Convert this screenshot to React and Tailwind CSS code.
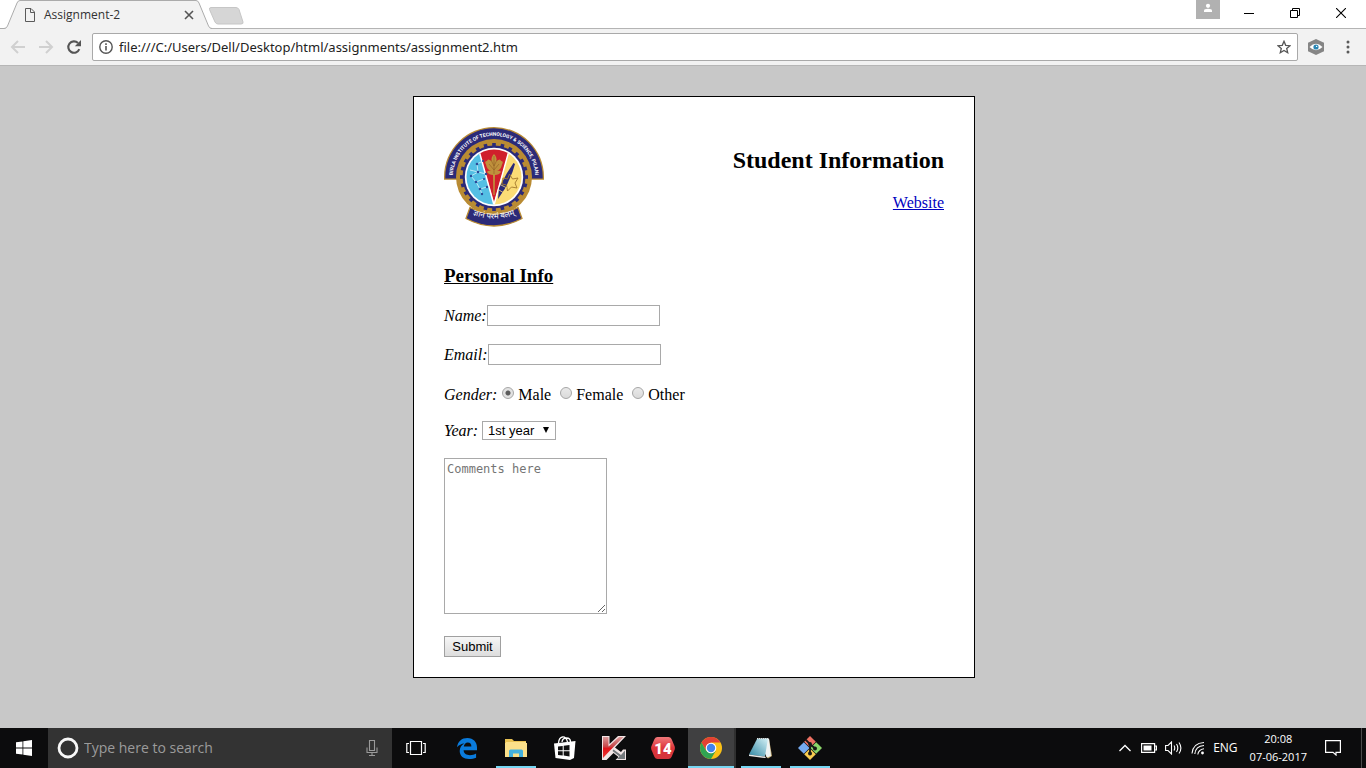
import React from 'react';

const teeth = Array.from({ length: 24 }, (_, i) => i * 15);

function CollegeLogo() {
  return (
    <svg viewBox="0 0 100 100" className="size-[100px] shrink-0" role="img" aria-label="College emblem">
      <defs>
        <clipPath id="disc"><circle cx="50" cy="50" r="27.5" /></clipPath>
        <path id="topArc" d="M8.800 53V50A41.200 41.200 0 0 1 91.200 50V53" />
        <path id="ribbonArc" d="M20 83.500Q50 100 80 83.500" />
      </defs>
      <path d="M0 52.800V50A50 50 0 0 1 100 50V52.800H86V50H14V52.800Z" fill="#b98b33" />
      <path d="M1.300 51.500V50A48.700 48.700 0 0 1 98.700 50V51.500H86V50H14V51.500Z" fill="#2b2a78" />
      <path d="M26 80.500Q50 93 74 80.500L78 91.500Q50 106.500 22 91.500Z" fill="#2b2a78" stroke="#b98b33" strokeWidth="1.3" />
      <circle cx="50" cy="50" r="38" fill="#b98b33" />
      <circle cx="50" cy="50" r="31.5" fill="#2b2a78" />
      {teeth.map((angle) => (
        <rect key={angle} x="48.2" y="16" width="3.6" height="4" fill="#2b2a78" transform={`rotate(${angle} 50 50)`} />
      ))}
      <circle cx="50" cy="50" r="29.2" fill="#fff" />
      <g clipPath="url(#disc)">
        <path d="M20 20h15L50 78H20Z" fill="#54bfe4" />
        <path d="M80 20H65L50 78h30Z" fill="#fbdc76" />
        <path d="M34 20h32L50 76Z" fill="#d01f2c" />
        <path d="M34 20 50 78 66 20" fill="none" stroke="#fff" strokeWidth="1.5" />
        <path d="m33 37 6-3m-6 3 1 8 8 2m-8-2-7 4m0 0 5 6 8-3m-8 3 4 7 7-2m-7 2 2 5M26 43l8 2" fill="none" stroke="#d8f2fa" strokeWidth=".8" />
        <g fill="#2b4a98">
          <circle cx="33" cy="37" r="1.3" /><circle cx="39" cy="34" r="1.1" /><circle cx="34" cy="45" r="1.3" />
          <circle cx="42" cy="47" r="1.2" /><circle cx="27" cy="49" r="1.2" /><circle cx="32" cy="55" r="1.3" />
          <circle cx="40" cy="52" r="1.1" /><circle cx="36" cy="62" r="1.3" /><circle cx="43" cy="60" r="1.2" />
          <circle cx="38" cy="67" r="1.2" />
        </g>
        <path d="M50 27q3 3 2.500 7 4-3 4.500 0 3 0 1 3.500-1 5-5 6.500 3-1 4 1-2 3-6 3l-.400 20h-1.200L49 48q-4 0-6-3 1-2 4-1-4-1.500-5-6.500-2-3.500 1-3.500.5-3 4.500 0-.5-4 2.500-7Z" fill="#c0913c" />
        <path d="M50 29v18m-3-14 3 6 3-6m-8 4 5 6 5-6" fill="none" stroke="#8f5f22" strokeWidth=".6" />
        <path d="m69.500 36 1.500 1-2.500 8-6.500 15-8 12 1-11 8-15Z" fill="#2b2a78" />
        <path d="m59 51 4.500 1 2-5 3 5 5.500-1-3 5 2 5-5.500-1-4 4-1-6-4.500-1Z" fill="none" stroke="#a3782c" strokeWidth=".9" />
        <path d="m57 58 6 3m-8 2 5 3" stroke="#fbdc76" strokeWidth=".8" />
      </g>
      <text fill="#fff" fontFamily="'Liberation Sans Narrow', Roboto, sans-serif" fontWeight="700" fontSize="5" textAnchor="middle">
        <textPath href="#topArc" startOffset="50%">BIRLA INSTITUTE OF TECHNOLOGY &amp; SCIENCE, PILANI</textPath>
      </text>
      <text fill="#fff" fontFamily="'Noto Sans Devanagari', 'Noto Sans', sans-serif" fontSize="8" textAnchor="middle">
        <textPath href="#ribbonArc" startOffset="50%">ज्ञानं परमं बलम्</textPath>
      </text>
    </svg>
  );
}

function BrowserChrome() {
  return (
    <header className="font-['Open_Sans',sans-serif]">
      <div className="flex h-[29px] items-start border-b border-[#b4b4b4] bg-white">
        <div className="relative h-[29px] w-[212px] shrink-0">
          <svg viewBox="0 0 212 29" className="absolute inset-0 h-[29px] w-[212px]" aria-hidden="true">
            <path d="M0 29 5 28.500Q7 28 8 26L17 3Q18 .5 20 .5H196Q198 .5 199 3L208 26Q209 28 212 29Z" fill="#f2f2f2" />
            <path d="M0 28.500H4Q6.500 28.500 7.500 26L17 3Q18 .5 20 .5H196Q198 .5 199 3L208.500 26Q209.500 28.500 212 28.500" fill="none" stroke="#ababab" />
          </svg>
          <div className="relative flex h-[30px] items-center pl-6 pr-[15px]">
            <svg viewBox="0 0 12 14" className="h-[14px] w-3" fill="none" stroke="#5a5a5a" aria-hidden="true">
              <path d="M1.500.5H7l3.500 3.500v9.500h-9ZM6.500.5v4h4" />
            </svg>
            <span className="ml-2 grow text-[12px] leading-4 text-[#333]">Assignment-2</span>
            <button aria-label="Close tab" className="grid size-4 place-items-center">
              <svg viewBox="0 0 10 10" className="size-[10px]" stroke="#555" strokeWidth="1.600" aria-hidden="true"><path d="m1 1 8 8M9 1 1 9" /></svg>
            </button>
          </div>
        </div>
        <button aria-label="New tab" className="mt-[7px] -ml-1">
          <svg viewBox="0 0 36 18" className="h-[18px] w-9" aria-hidden="true">
            <path d="M3 .5h25q2 0 3 2l4 12.500q.5 2-2 2H10q-2 0-3-2L1.500 2.500Q1 .5 3 .5Z" fill="#d6d6d6" stroke="#c6c6c6" />
          </svg>
        </button>
        <div className="ml-auto flex">
          <button aria-label="Profile" className="flex h-[19px] w-6 justify-center bg-[#b1b1b1] pt-[3px]">
            <svg viewBox="0 0 10 10" className="size-[10px]" fill="#fff" aria-hidden="true"><circle cx="5" cy="2.800" r="2.100" /><path d="M1 9V7.500Q1 5.800 5 5.800T9 7.500V9Z" /></svg>
          </button>
          <button aria-label="Minimize" className="ml-[6px] grid h-[26px] w-[46px] place-items-center">
            <svg viewBox="0 0 10 10" className="size-[10px]" stroke="#000" aria-hidden="true"><path d="M0 5.500h10" /></svg>
          </button>
          <button aria-label="Restore" className="grid h-[26px] w-[46px] place-items-center">
            <svg viewBox="0 0 10 10" className="size-[10px]" fill="none" stroke="#000" aria-hidden="true"><path d="M.5 2.500h7v7h-7ZM2.500 2.500v-2h7v7h-2" /></svg>
          </button>
          <button aria-label="Close" className="mr-[2px] grid h-[26px] w-[46px] place-items-center">
            <svg viewBox="0 0 10 10" className="size-[10px]" stroke="#000" strokeWidth="1.100" aria-hidden="true"><path d="m0 0 10 10M10 0 0 10" /></svg>
          </button>
        </div>
      </div>
      <div className="flex h-[37px] items-center border-b border-[#b6b6b6] bg-[#f2f2f2] pl-[10px]">
        <button aria-label="Back" className="grid size-4 place-items-center">
          <svg viewBox="0 0 16 16" className="size-4" fill="none" stroke="#d0d0d0" strokeWidth="2" aria-hidden="true"><path d="M15 8H2.500M8 2 2 8l6 6" /></svg>
        </button>
        <button aria-label="Forward" className="ml-3 grid size-4 place-items-center">
          <svg viewBox="0 0 16 16" className="size-4" fill="none" stroke="#d0d0d0" strokeWidth="2" aria-hidden="true"><path d="M1 8h12.500M8 2l6 6-6 6" /></svg>
        </button>
        <button aria-label="Reload" className="ml-3 grid size-4 place-items-center">
          <svg viewBox="0 0 16 16" className="size-4" aria-hidden="true"><path d="M13.300 10.200A5.700 5.700 0 1 1 12 4" fill="none" stroke="#555" strokeWidth="2.100" /><path d="M15 1v6.200H8.800Z" fill="#555" /></svg>
        </button>
        <div className="ml-[10px] flex h-7 grow items-center rounded-xs border border-[#a9a9a9] bg-white px-[6px]">
          <svg viewBox="0 0 14 14" className="size-[14px] shrink-0" aria-hidden="true"><circle cx="7" cy="7" r="6.200" fill="none" stroke="#555" strokeWidth="1.400" /><path d="M6.200 6h1.600v4.500H6.200ZM6.200 3.300h1.600v1.600H6.200Z" fill="#555" /></svg>
          <input aria-label="Address" defaultValue="file:///C:/Users/Dell/Desktop/html/assignments/assignment2.htm" className="ml-[6px] min-w-0 grow bg-transparent font-['Noto_Sans',sans-serif] text-[13px] leading-5 text-[#222] outline-none" />
          <button aria-label="Bookmark">
            <svg viewBox="0 0 14 14" className="size-[14px]" fill="none" stroke="#555" strokeWidth="1.300" aria-hidden="true"><path d="m7 1.300 1.700 4 4.300.4-3.300 2.800 1 4.200L7 10.500l-3.700 2.200 1-4.200L1 5.700l4.300-.4Z" /></svg>
          </button>
        </div>
        <button aria-label="Extension" className="ml-[10px]">
          <svg viewBox="0 0 16 16" className="size-4" aria-hidden="true"><path d="m8 0 8 3.800v8.400L8 16l-8-3.800V3.800Z" fill="#858585" /><path d="M1.500 8Q8 1.500 14.500 8 8 14.500 1.500 8Z" fill="#fff" /><circle cx="8" cy="8" r="2.600" fill="#2a86b4" /><circle cx="8.600" cy="7.400" r=".7" fill="#fff" /></svg>
        </button>
        <button aria-label="Menu" className="ml-4 mr-[10px] grid w-4 place-items-center">
          <svg viewBox="0 0 4 14" className="h-[14px] w-1" fill="#5a5a5a" aria-hidden="true"><circle cx="2" cy="2" r="1.500" /><circle cx="2" cy="7" r="1.500" /><circle cx="2" cy="12" r="1.500" /></svg>
        </button>
      </div>
    </header>
  );
}

function TextField({ id, label }) {
  return (
    <div className="flex h-[21px] items-center">
      <label htmlFor={id} className="italic">{label}</label>
      <input id={id} className="h-[21px] w-[173px] border border-[#a9a9a9] bg-white px-[2px] font-['Liberation_Sans',sans-serif] text-[13px]" />
    </div>
  );
}

function GenderOption({ label, checked }) {
  return (
    <label className="flex items-center gap-1">
      <input
        type="radio"
        name="gender"
        defaultChecked={checked}
        className="mb-[4px] size-[12px] appearance-none rounded-full border border-[#a6a6a6] bg-linear-to-b from-[#e9e9e9] to-[#dadada] checked:bg-[radial-gradient(circle,#5c5c5c_0_2px,#e2e2e2_3px)]"
      />
      {label}
    </label>
  );
}

function StudentForm() {
  return (
    <main className="grow bg-[#c8c8c8] pt-[30px] pl-[22px]">
      <section className="mx-auto w-[562px] max-w-full border border-black bg-white px-[30px] pt-[30px] pb-[20px] font-['Liberation_Serif',serif] text-[16px] leading-5 text-black">
        <div className="flex justify-between">
          <CollegeLogo />
          <div className="pt-5 text-right">
            <h2 className="text-[24px] leading-[26px] font-bold">Student Information</h2>
            <a href="#website" className="mt-5 inline-block text-[#0000c0] underline">Website</a>
          </div>
        </div>
        <h3 className="mt-[38px] text-[19px] leading-[22px] font-bold underline">Personal Info</h3>
        <form className="mt-[18px] flex flex-col items-start gap-[18px]" onSubmit={(e) => e.preventDefault()}>
          <TextField id="name" label="Name:" />
          <TextField id="email" label="Email:" />
          <fieldset className="flex h-5 items-center pt-[2px]">
            <legend className="float-left mr-[5px] italic">Gender:</legend>
            <div className="flex gap-[9px]">
              <GenderOption label="Male" checked />
              <GenderOption label="Female" />
              <GenderOption label="Other" />
            </div>
          </fieldset>
          <div className="flex h-[19px] items-center">
            <label htmlFor="year" className="italic">Year:</label>
            <div className="relative ml-1 h-[19px]">
              <select id="year" className="block h-[19px] w-[74px] appearance-none border border-[#a9a9a9] bg-white pl-[5px] font-['Liberation_Sans',sans-serif] text-[13px] leading-4">
                <option>1st year</option>
                <option>2nd year</option>
                <option>3rd year</option>
                <option>4th year</option>
              </select>
              <svg viewBox="0 0 6 6" className="pointer-events-none absolute top-[6px] right-[7px] size-[6px]" aria-hidden="true"><path d="M0 0h6L3 6Z" /></svg>
            </div>
          </div>
          <textarea aria-label="Comments" placeholder="Comments here" className="h-[156px] w-[163px] resize border border-[#a9a9a9] bg-white p-[2px] font-['DejaVu_Sans_Mono',monospace] text-[12px] leading-4 placeholder:text-[#757575]" />
          <button type="submit" className="mt-1 h-[21px] w-[57px] border border-[#a0a0a0] bg-linear-to-b from-[#f6f6f6] to-[#dddddd] font-['Liberation_Sans',sans-serif] text-[13px] leading-4">Submit</button>
        </form>
      </section>
    </main>
  );
}

function TaskButton({ label, open, active, children }) {
  return (
    <button aria-label={label} className={`relative grid h-10 w-12 shrink-0 place-items-center ${active ? 'border-r-2 border-[#303030] bg-[#404041]' : ''}`}>
      {children}
      {open && <span className={`absolute bottom-0 h-[2px] bg-[#76d6f2] ${active ? 'inset-x-0' : 'inset-x-1'}`} />}
    </button>
  );
}

function Taskbar() {
  return (
    <footer className="flex h-10 shrink-0 items-center bg-[#0c0c0d] font-['Open_Sans',sans-serif] text-white">
      <button aria-label="Start" className="grid h-10 w-12 shrink-0 place-items-center">
        <svg viewBox="0 0 16 16" className="size-4" fill="#fff" aria-hidden="true"><path d="M0 2.300 6.500 1.400V7.600H0ZM7.300 1.300 16 0v7.600H7.300ZM0 8.400h6.500v6.200L0 13.700ZM7.300 8.400H16V16l-8.700-1.300Z" /></svg>
      </button>
      <div className="flex h-10 w-[344px] items-center bg-[#333] pl-2 pr-3">
        <svg viewBox="0 0 24 24" className="size-6 shrink-0" aria-hidden="true"><circle cx="12" cy="12" r="9" fill="none" stroke="#f8f8f8" strokeWidth="2.800" /></svg>
        <input aria-label="Search" placeholder="Type here to search" className="ml-1 min-w-0 grow bg-transparent text-[14px] leading-5 outline-none placeholder:text-[#9b9b9b]" />
        <svg viewBox="0 0 16 18" className="h-[18px] w-4 shrink-0" fill="none" stroke="#9a9a9a" strokeWidth="1.100" aria-hidden="true"><path d="M5.500 1.500h5v10h-5ZM3 8.500v5h10v-5M8 13.500v3M5 16.500h6" /></svg>
      </div>
      <TaskButton label="Task View">
        <svg viewBox="0 0 20 16" className="h-4 w-5" fill="none" stroke="#fff" strokeWidth="1.200" aria-hidden="true"><path d="M4.500 1.500h11v13h-11ZM3 3.500H.8v9H3M17 3.500h2.200v9H17" /></svg>
      </TaskButton>
      <div className="ml-[3px] flex gap-px">
        <TaskButton label="Edge">
          <svg viewBox="0 0 20 21" className="h-[21px] w-5" aria-hidden="true"><path d="M0 9.300C.8 3.300 4.800 0 10.400 0 16.500 0 20 4.300 20 9.500V12.300H6.600c.2 3.400 2.900 4.900 6.300 4.900 2.500 0 4.400-.6 6.200-1.700v4.200C17.200 20.600 14.700 21 12 21 6.500 21 2.700 18 2.700 13c0-3.300 1.700-6 4.700-7.500C4.500 5.700 1.800 7.100 0 9.300ZM6.800 8.500h7.600c0-2.500-1.300-4-3.600-4-2.200 0-3.700 1.700-4 4Z" fill="#0a7bdc" /></svg>
        </TaskButton>
        <TaskButton label="File Explorer" open>
          <svg viewBox="0 0 22 18" className="h-[18px] w-[22px]" aria-hidden="true"><path d="M0 0h7l2 2h12v16H0Z" fill="#e9c253" /><path d="M1 3h20v1h1v14H0V4h1Z" fill="#fbe08a" /><path d="M4 18v-6q0-1.500 1.500-1.500h11q1.500 0 1.500 1.500v6h-4v-3.500H8V18Z" fill="#43b1de" /></svg>
        </TaskButton>
        <TaskButton label="Store">
          <svg viewBox="0 0 22 24" className="h-6 w-[22px]" aria-hidden="true"><path d="M4.500 7Q5 1.500 8.500 1t5 5M8 6q.5-4 4.500-4t4 4" fill="none" stroke="#fff" strokeWidth="1.300" /><path d="M0 7.500 21.500 5 20 22l-4 2L1.500 22Z" fill="#fff" /><path d="m4 10.500 4.700-.6v4.300H4ZM9.700 9.800 15.500 9v5.200H9.700ZM4 15.200h4.700v4.300L4 19ZM9.700 15.200h5.800v5.300l-5.800-.9Z" fill="#111" /></svg>
        </TaskButton>
        <TaskButton label="Kaspersky">
          <svg viewBox="0 0 24 24" className="size-6" aria-hidden="true"><defs><linearGradient id="kay" x1="0" y1="0" x2="0" y2="1"><stop stopColor="#d99a9a" /><stop offset=".45" stopColor="#c9474a" /><stop offset=".55" stopColor="#e0141a" /><stop offset="1" stopColor="#ee3a35" /></linearGradient></defs><path d="M0 0h7.500v8L16 0h8L13 11.500l6 4.500 2-2.500h3V24H13.500l3-3-5-4-7 7H0Z" fill="#f3e6e6" /><path d="M1 1h5.500v9.500L17 1h4.500L9 13.500 1 22Z" fill="url(#kay)" /><path d="m11.500 13.500 7.500 5.500 4-4.500V23h-8l2.500-2.500-7-5.500Z" fill="#74797c" /></svg>
        </TaskButton>
        <TaskButton label="Calendar 14">
          <svg viewBox="0 0 24 22" className="h-[22px] w-6" aria-hidden="true"><defs><linearGradient id="hex" x1="0" y1="0" x2="0" y2="1"><stop stopColor="#f0787a" /><stop offset=".5" stopColor="#dd353a" /><stop offset="1" stopColor="#d3343c" /></linearGradient></defs><path d="M6.500 0h11q2 0 3 2l3 7q.8 2 0 4l-3 7q-1 2-3 2h-11q-2 0-3-2l-3-7q-.8-2 0-4l3-7q1-2 3-2Z" fill="url(#hex)" /><text x="12" y="16.500" textAnchor="middle" fontFamily="Roboto, sans-serif" fontWeight="900" fontSize="15" fill="#fff">14</text></svg>
        </TaskButton>
        <TaskButton label="Chrome" open active>
          <svg viewBox="0 0 22 22" className="size-[22px]" aria-hidden="true"><circle cx="11" cy="11" r="11" fill="#fbc116" /><path d="M1.500 5.500A11 11 0 0 1 20.500 5.500H11L6.200 13.800Z" fill="#e24134" /><path d="M1.500 5.500A11 11 0 0 0 11 22l4.800-8.200L11 16.500 6.200 13.700Z" fill="#30a352" /><circle cx="11" cy="11" r="5.300" fill="#fff" /><circle cx="11" cy="11" r="4.200" fill="#4283ed" /></svg>
        </TaskButton>
        <TaskButton label="Notepad" open>
          <svg viewBox="0 0 24 22" className="h-[22px] w-6" aria-hidden="true"><defs><linearGradient id="pad" x1="0" y1="1" x2="1" y2="0"><stop stopColor="#2f87a3" /><stop offset="1" stopColor="#d5f1f6" /></linearGradient></defs><path d="M20 2 23 19l-4 2.500-2-2Z" fill="#c4ab72" /><path d="M8 1.500h12L22 19l-4 1.500Z" fill="#eef3f3" /><path d="m8 2 11-.5-3 18L0 17.500Z" fill="url(#pad)" /><path d="m0 17.500 16 2 1 1-1 .5L0 19Z" fill="#e7e8e7" /><path d="M8 1.500h11.500" stroke="#dce5e6" strokeWidth="1.200" strokeDasharray="1 1" /></svg>
        </TaskButton>
        <TaskButton label="Git" open>
          <svg viewBox="0 0 24 24" className="size-6" aria-hidden="true"><path d="m12 0 5.800 5.800L12 11.600 6.200 5.800Z" fill="#ee7163" /><path d="m5.800 6.200 5.800 5.800-5.800 5.800L0 12Z" fill="#75aaf0" /><path d="m18.200 6.200 5.800 5.800-5.800 5.800-5.800-5.800Z" fill="#8bd66a" /><path d="m12 12.400 5.800 5.800L12 24l-5.800-5.800Z" fill="#f8cc50" /><path d="m7.500 3.500 4.500 4.500v10m0-10 5 4.500" stroke="#171717" strokeWidth="1.800" fill="none" /><circle cx="12" cy="8" r="1.900" fill="#171717" /><circle cx="12" cy="17.500" r="2" fill="#171717" /><circle cx="17" cy="12.500" r="2" fill="#171717" /></svg>
        </TaskButton>
      </div>
      <div className="ml-auto flex h-10 items-center">
        <button aria-label="Show hidden icons" className="grid w-6 place-items-center">
          <svg viewBox="0 0 12 8" className="h-2 w-3" fill="none" stroke="#fff" strokeWidth="1.300" aria-hidden="true"><path d="m.5 7 5.500-5.500L11.500 7" /></svg>
        </button>
        <svg viewBox="0 0 16 10" className="ml-1 h-[10px] w-4" aria-hidden="true"><path d="M.6.600h13v8.800H.6ZM14 3h1.400v4H14" fill="none" stroke="#fff" strokeWidth="1.200" /><path d="M2.500 2.500h8v5h-8Z" fill="#fff" /></svg>
        <svg viewBox="0 0 18 14" className="ml-2 h-[14px] w-[18px]" fill="none" stroke="#fff" strokeWidth="1.100" aria-hidden="true"><path d="M.6 4.500H3L6.500 1v12L3 9.500H.6ZM9 4.500q1.500 2.500 0 5M11.500 3q2.600 4 0 8M14 1.500q3.800 5.500 0 11" /></svg>
        <svg viewBox="0 0 14 14" className="ml-2 h-[14px] w-[14px]" fill="none" stroke="#fff" strokeWidth="1.100" aria-hidden="true"><path d="M1 12.500Q2 2 13 1.500M3.800 13Q4.500 5 13 4.500M6.800 13.500Q7.500 8.500 13 7.700" /><circle cx="11.500" cy="12" r="1.400" fill="#fff" stroke="none" /></svg>
        <span className="ml-2 text-[12px] leading-4">ENG</span>
        <time className="ml-3 text-center text-[11px] leading-[18px]">20:08<br />07-06-2017</time>
        <button aria-label="Notifications" className="ml-[18px] mr-5">
          <svg viewBox="0 0 16 16" className="size-4" fill="none" stroke="#fff" strokeWidth="1.200" aria-hidden="true"><path d="M.6.600h14.800v11.800h-4.400V15L8 12.400H.6Z" /></svg>
        </button>
        <span className="mr-1 h-10 w-px bg-[#4a4a4a]" />
      </div>
    </footer>
  );
}

export default function App() {
  return (
    <div className="flex min-h-screen flex-col">
      <BrowserChrome />
      <StudentForm />
      <Taskbar />
    </div>
  );
}
